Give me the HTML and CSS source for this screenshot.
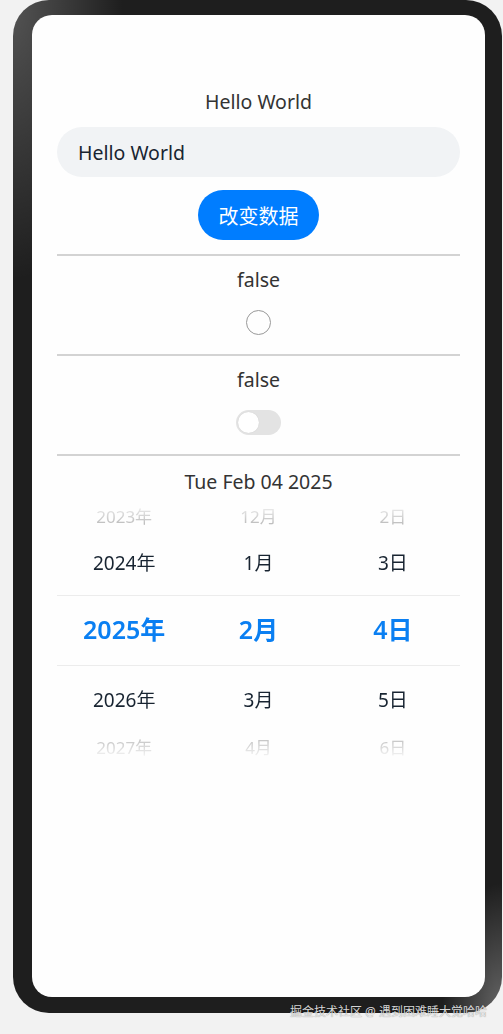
FILE: index.html
```html
<!DOCTYPE html>
<html lang="zh-CN">
<head>
  <meta charset="UTF-8" />
  <meta name="viewport" content="width=device-width, initial-scale=1.0" />
  <title>Hello World</title>
  <link rel="stylesheet" href="styles.css">
</head>
<body>
  <div class="phone">
    <div class="screen">
      <div class="content">
        <div class="label title">Hello World</div>
        <input type="text" class="text-input" value="Hello World">
        <button class="change-button">改变数据</button>

        <div class="divider"></div>
        <div class="section">
          <div class="label">false</div>
          <div class="radio"></div>
        </div>

        <div class="divider"></div>
        <div class="section">
          <div class="label">false</div>
          <div class="toggle"><div class="knob"></div></div>
        </div>

        <div class="divider"></div>
        <div class="label date-label">Tue Feb 04 2025</div>

        <div class="picker">
          <div class="picker-row edge">
            <span>2023年</span><span>12月</span><span>2日</span>
          </div>
          <div class="picker-row near">
            <span>2024年</span><span>1月</span><span>3日</span>
          </div>
          <div class="picker-row selected">
            <span>2025年</span><span>2月</span><span>4日</span>
          </div>
          <div class="picker-row near">
            <span>2026年</span><span>3月</span><span>5日</span>
          </div>
          <div class="picker-row edge">
            <span>2027年</span><span>4月</span><span>6日</span>
          </div>
        </div>
      </div>
    </div>
  </div>

  <div class="watermark">掘金技术社区 @ 遇到困难睡大觉哈哈</div>
</body>
</html>
```

FILE: styles.css
```css
body {
  margin: 0;
  font-family: "Noto Sans", "Noto Sans CJK SC", sans-serif;
  background-color: #f2f2f2;
  height: 1034px;
  overflow: hidden;
  position: relative;
}

.phone {
  margin-left: 13px;
  width: 489px;
  height: 1013px;
  box-sizing: border-box;
  padding: 15px 17px 16px 19px;
  border-radius: 36px;
  background:
    radial-gradient(ellipse 110px 280px at 0 0, rgba(255,255,255,0.24), rgba(255,255,255,0) 100%),
    radial-gradient(ellipse 60px 130px at 100% 100%, rgba(255,255,255,0.32), rgba(255,255,255,0) 100%),
    #1e1e1e;
}

.screen {
  height: 100%;
  background-color: #fefefe;
  border-radius: 20px;
  overflow: hidden;
}

.content {
  display: flex;
  flex-direction: column;
  align-items: center;
  padding: 73px 25px 0;
}

.label {
  font-size: 19.5px;
  line-height: 27px;
  color: #333;
}

.text-input {
  margin-top: 12px;
  width: 100%;
  height: 50px;
  box-sizing: border-box;
  border: none;
  border-radius: 25px;
  background-color: #f1f3f5;
  padding: 0 21px;
  font-family: inherit;
  font-size: 19.5px;
  color: #182431;
  outline: none;
}

.change-button {
  margin-top: 13px;
  width: 121px;
  height: 50px;
  border: none;
  border-radius: 25px;
  background-color: #007dff;
  color: #fff;
  font-family: inherit;
  font-size: 20px;
  cursor: pointer;
}

.divider {
  width: 100%;
  height: 2px;
  background-color: #d3d3d3;
}

.change-button + .divider {
  margin-top: 14px;
}

.section {
  display: flex;
  flex-direction: column;
  align-items: center;
  gap: 17px;
  padding: 10px 0 19px;
}

.radio {
  width: 25px;
  height: 25px;
  box-sizing: border-box;
  border: 1.5px solid #999;
  border-radius: 50%;
}

.toggle {
  width: 45px;
  height: 25px;
  box-sizing: border-box;
  padding: 2px;
  border-radius: 13px;
  background-color: #e3e3e3;
}

.knob {
  width: 21px;
  height: 21px;
  border-radius: 50%;
  background-color: #fff;
  box-shadow: 0 0 1px rgba(0,0,0,0.15);
}

.date-label {
  margin-top: 12px;
}

.picker {
  margin-top: 6px;
  width: 100%;
  -webkit-mask-image: linear-gradient(to bottom, transparent 0, #000 26px, #000 calc(100% - 26px), transparent 100%);
  mask-image: linear-gradient(to bottom, transparent 0, #000 26px, #000 calc(100% - 26px), transparent 100%);
}

.picker-row {
  display: grid;
  grid-template-columns: 1fr 1fr 1fr;
  align-items: center;
  text-align: center;
  color: #182431;
}

.picker-row.edge {
  height: 28px;
  font-size: 17px;
  color: #b5b5b5;
}

.picker-row.near {
  height: 66px;
  font-size: 19px;
}

.picker-row.selected {
  height: 71px;
  box-sizing: border-box;
  padding-bottom: 5px;
  border-top: 1px solid #ececec;
  border-bottom: 1px solid #ececec;
  font-size: 25px;
  font-weight: 600;
  color: #0a7ff2;
}

.watermark {
  position: absolute;
  right: 16px;
  top: 1003px;
  font-size: 12px;
  line-height: 18px;
  color: rgba(240,240,240,0.9);
  text-shadow: 0 0 1px rgba(0,0,0,0.5);
}
```
